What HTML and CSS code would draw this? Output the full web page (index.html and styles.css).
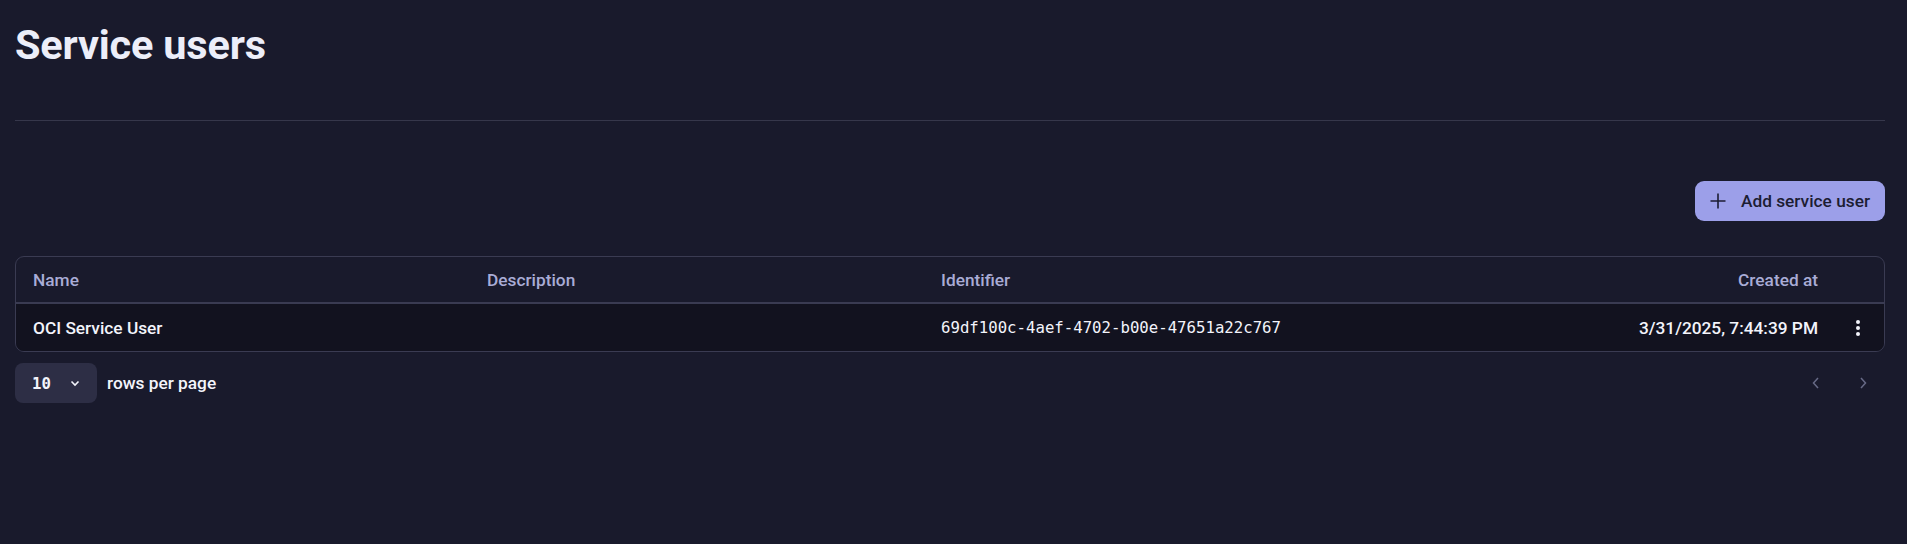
FILE: index.html
```html
<!DOCTYPE html>
<html lang="en">
<head>
<meta charset="utf-8">
<title>Service users</title>
<link rel="stylesheet" href="styles.css">
</head>
<body>
<main class="page">
  <header class="page-header">
    <h1 class="title">Service users</h1>
  </header>
  <div class="toolbar">
    <button class="btn-primary" type="button">
      <svg class="btn-icon" viewBox="0 0 18 18" width="18" height="18" aria-hidden="true">
        <path d="M9 1.5v15M1.5 9h15" stroke="currentColor" stroke-width="1.6" fill="none"/>
      </svg>
      <span>Add service user</span>
    </button>
  </div>
  <div class="table">
    <div class="row head">
      <div class="cell">Name</div>
      <div class="cell">Description</div>
      <div class="cell">Identifier</div>
      <div class="cell right">Created at</div>
      <div class="cell"></div>
    </div>
    <div class="row body">
      <div class="cell">OCI Service User</div>
      <div class="cell"></div>
      <div class="cell mono">69df100c-4aef-4702-b00e-47651a22c767</div>
      <div class="cell right">3/31/2025, 7:44:39 PM</div>
      <div class="cell center">
        <svg class="kebab" viewBox="0 0 6 18" width="6" height="18" aria-hidden="true">
          <circle cx="3" cy="3" r="2" fill="currentColor"/>
          <circle cx="3" cy="9" r="2" fill="currentColor"/>
          <circle cx="3" cy="15" r="2" fill="currentColor"/>
        </svg>
      </div>
    </div>
  </div>
  <div class="pager">
    <div class="pager-left">
      <button class="select" type="button">
        <span class="select-value">10</span>
        <svg viewBox="0 0 12 12" width="12" height="12" aria-hidden="true">
          <path d="M2.5 4.5L6 8l3.5-3.5" stroke="currentColor" stroke-width="1.6" fill="none"/>
        </svg>
      </button>
      <span class="pager-label">rows per page</span>
    </div>
    <div class="pager-nav">
      <svg viewBox="0 0 12 14" width="12" height="14" aria-hidden="true">
        <path d="M8 2L3.5 7 8 12" stroke="currentColor" stroke-width="1.5" fill="none"/>
      </svg>
      <svg viewBox="0 0 12 14" width="12" height="14" aria-hidden="true">
        <path d="M4 2l4.5 5L4 12" stroke="currentColor" stroke-width="1.5" fill="none"/>
      </svg>
    </div>
  </div>
</main>
</body>
</html>
```

FILE: styles.css
```css
* { box-sizing: border-box; }

html, body {
  margin: 0;
  padding: 0;
  background: #191a2c;
  height: 100%;
}

body {
  font-family: Roboto, "Liberation Sans", sans-serif;
  color: #eceef9;
}

.page {
  padding: 0 22px 0 15px;
}

.page-header {
  padding-top: 18px;
  padding-bottom: 48px;
  border-bottom: 1px solid #36374b;
}

.title {
  margin: 0;
  font-size: 41.5px;
  line-height: 54px;
  font-weight: 700;
  color: #eceef9;
  letter-spacing: -0.2px;
}

.toolbar {
  display: flex;
  justify-content: flex-end;
  padding-top: 60px;
  padding-bottom: 35px;
}

.btn-primary {
  display: flex;
  align-items: center;
  gap: 14px;
  height: 40px;
  padding: 0 15px 0 14px;
  border: 0;
  border-radius: 9px;
  background: #9c9fe9;
  color: #1c1d33;
  font-family: inherit;
  font-size: 17.3px;
  font-weight: 500;
}

.btn-icon { display: block; }

.table {
  border: 1px solid #3a3b52;
  border-radius: 9px;
  overflow: hidden;
}

.row {
  display: grid;
  grid-template-columns: 454px 454px 454px 1fr 50px;
  align-items: center;
}

.row.head {
  height: 47px;
  border-bottom: 2px solid #3a3b52;
  color: #a9acd6;
  font-weight: 500;
  font-size: 17.3px;
}

.row.body {
  height: 47px;
  background: #12121f;
  font-size: 17.3px;
  font-weight: 500;
  color: #f3f4fb;
}

.cell {
  padding: 0 16px 0 17px;
  white-space: nowrap;
}

.cell.right { text-align: right; }

.cell.center {
  display: flex;
  justify-content: center;
  padding: 0 2px 0 0;
}

.mono {
  font-family: "DejaVu Sans Mono", "Liberation Mono", monospace;
  font-size: 15.7px;
  font-weight: 400;
}

.kebab { display: block; color: #f3f4fb; }

.pager {
  display: flex;
  justify-content: space-between;
  align-items: center;
  padding-top: 11px;
}

.pager-left {
  display: flex;
  align-items: center;
  gap: 10px;
}

.select {
  display: flex;
  align-items: center;
  gap: 18px;
  width: 82px;
  height: 40px;
  padding: 0 0 0 17px;
  border: 0;
  border-radius: 8px;
  background: #2d2e45;
  color: #f3f4fb;
}

.select-value {
  font-family: "DejaVu Sans Mono", "Liberation Mono", monospace;
  font-size: 15.7px;
  font-weight: 700;
}

.pager-label {
  font-size: 17.3px;
  font-weight: 500;
  color: #f3f4fb;
}

.pager-nav {
  display: flex;
  gap: 35px;
  padding-right: 16px;
  color: #676a86;
}

.pager-nav svg { display: block; }
```
